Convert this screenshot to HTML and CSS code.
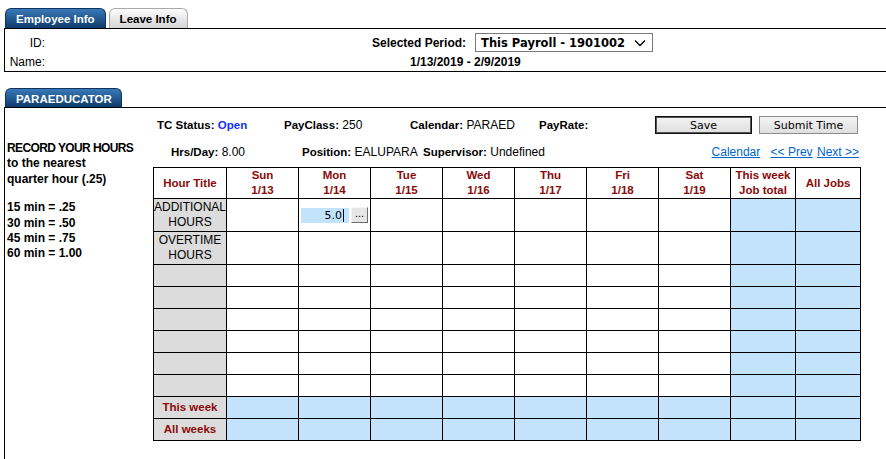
FILE: index.html
```html
<!DOCTYPE html>
<html>
<head>
  <meta charset="UTF-8">
  <title>Time Card - Employee Info</title>
  <link rel="stylesheet" href="styles.css">
</head>
<body>
  <div class="tabs">
    <div class="tab active">Employee Info</div>
    <div class="tab">Leave Info</div>
  </div>

  <div class="info-box">
    <div class="info-row">
      <span class="info-label">ID:</span>
      <span class="period-label">Selected Period:</span>
      <div class="period-select">
        <span>This Payroll - 1901002</span>
        <svg width="12" height="8" viewBox="0 0 12 8"><path d="M1 1.5 L6 6.5 L11 1.5" fill="none" stroke="#000" stroke-width="1.3"/></svg>
      </div>
    </div>
    <div class="info-row">
      <span class="info-label">Name:</span>
      <span class="period-dates">1/13/2019 - 2/9/2019</span>
    </div>
  </div>

  <div class="tabs job-tabs">
    <div class="tab active">PARAEDUCATOR</div>
  </div>

  <div class="job-box">
    <div class="instructions">
      <p><span class="caps">RECORD YOUR HOURS</span><br>to the nearest<br>quarter hour (.25)</p>
      <p>15 min = .25<br>30 min = .50<br>45 min = .75<br>60 min = 1.00</p>
    </div>

    <div class="timecard">
      <div class="status-row">
        <span class="field f-status"><b>TC Status:</b> <b class="open">Open</b></span>
        <span class="field f-payclass"><b>PayClass:</b> 250</span>
        <span class="field f-calendar"><b>Calendar:</b> PARAED</span>
        <span class="field f-payrate"><b>PayRate:</b></span>
        <button class="btn default">Save</button>
        <button class="btn">Submit Time</button>
      </div>

      <div class="detail-row">
        <span class="field f-hrs"><b>Hrs/Day:</b> 8.00</span>
        <span class="field f-position"><b>Position:</b> EALUPARA</span>
        <span class="field"><b>Supervisor:</b> Undefined</span>
        <span class="nav-links">
          <a href="#" class="cal-link">Calendar</a>
          <a href="#" class="prev-link">&lt;&lt; Prev</a>
          <a href="#">Next &gt;&gt;</a>
        </span>
      </div>

      <table class="hours">
        <colgroup>
          <col class="c-title">
          <col class="c-day"><col class="c-day"><col class="c-day"><col class="c-day">
          <col class="c-day"><col class="c-day"><col class="c-day">
          <col class="c-total"><col class="c-total">
        </colgroup>
        <thead>
          <tr class="head-row">
            <th>Hour Title</th>
            <th>Sun<br>1/13</th>
            <th>Mon<br>1/14</th>
            <th>Tue<br>1/15</th>
            <th>Wed<br>1/16</th>
            <th>Thu<br>1/17</th>
            <th>Fri<br>1/18</th>
            <th>Sat<br>1/19</th>
            <th>This week<br>Job total</th>
            <th>All Jobs</th>
          </tr>
        </thead>
        <tbody>
          <tr class="tall-row">
            <td class="title">ADDITIONAL<br>HOURS</td>
            <td></td>
            <td>
              <span class="entry">
                <span class="hours-input">5.0<span class="caret"></span></span>
                <span class="more-btn">...</span>
              </span>
            </td>
            <td></td><td></td><td></td><td></td><td></td>
            <td class="sum"></td><td class="sum"></td>
          </tr>
          <tr class="tall-row">
            <td class="title">OVERTIME<br>HOURS</td>
            <td></td><td></td><td></td><td></td><td></td><td></td><td></td>
            <td class="sum"></td><td class="sum"></td>
          </tr>
          <tr><td class="title"></td><td></td><td></td><td></td><td></td><td></td><td></td><td></td><td class="sum"></td><td class="sum"></td></tr>
          <tr><td class="title"></td><td></td><td></td><td></td><td></td><td></td><td></td><td></td><td class="sum"></td><td class="sum"></td></tr>
          <tr><td class="title"></td><td></td><td></td><td></td><td></td><td></td><td></td><td></td><td class="sum"></td><td class="sum"></td></tr>
          <tr><td class="title"></td><td></td><td></td><td></td><td></td><td></td><td></td><td></td><td class="sum"></td><td class="sum"></td></tr>
          <tr><td class="title"></td><td></td><td></td><td></td><td></td><td></td><td></td><td></td><td class="sum"></td><td class="sum"></td></tr>
          <tr><td class="title"></td><td></td><td></td><td></td><td></td><td></td><td></td><td></td><td class="sum"></td><td class="sum"></td></tr>
          <tr class="total-row">
            <td class="title">This week</td>
            <td></td><td></td><td></td><td></td><td></td><td></td><td></td><td></td><td></td>
          </tr>
          <tr class="total-row">
            <td class="title">All weeks</td>
            <td></td><td></td><td></td><td></td><td></td><td></td><td></td><td></td><td></td>
          </tr>
        </tbody>
      </table>
    </div>
  </div>
</body>
</html>
```

FILE: styles.css
```css
:root {
  --tab-blue-top: #3a79b8;
  --tab-blue-bottom: #0e3b6c;
  --header-red: #8b0a0a;
  --cell-blue: #c3e3fd;
  --cell-gray: #dcdcdc;
  --link-blue: #0066cc;
}

body {
  margin: 0;
  font-family: "Liberation Sans", Arial, sans-serif;
  font-size: 12px;
  color: #000;
  background: #fff;
}

p {
  margin: 0;
}

/* tabs */
.tabs {
  display: flex;
  gap: 3px;
  padding: 8px 0 0 5px;
  height: 20px;
}
.tab {
  height: 20px;
  line-height: 21px;
  padding: 0 10px;
  box-sizing: border-box;
  border: 1px solid #a8a8a8;
  border-bottom: none;
  border-radius: 6px 6px 0 0;
  background: linear-gradient(#fcfcfc, #d5d5d5);
  font-weight: bold;
  font-size: 11.5px;
}
.tab.active {
  border-color: #0c3461;
  background: linear-gradient(var(--tab-blue-top), var(--tab-blue-bottom));
  color: #fff;
}

/* employee info */
.info-box {
  margin-left: 4px;
  height: 38px;
  border: 1px solid #000;
  border-right: none;
  padding-top: 4px;
}
.info-row {
  display: flex;
  align-items: center;
  height: 19px;
}
.info-label {
  width: 40px;
  text-align: right;
}
.period-label {
  margin-left: 327px;
  font-weight: bold;
}
.period-select {
  display: flex;
  align-items: center;
  justify-content: space-between;
  margin-left: 9px;
  width: 178px;
  height: 19px;
  box-sizing: border-box;
  padding: 0 6px 0 5px;
  border: 1px solid #7a7a7a;
  font-family: "DejaVu Sans", Verdana, sans-serif;
  font-size: 11.5px;
  font-weight: bold;
}
.period-dates {
  margin-left: 365px;
  font-weight: bold;
}

/* job section */
.job-tabs {
  padding-top: 16px;
  height: 19px;
}
.job-tabs .tab {
  height: 19px;
  line-height: 20px;
  padding: 0 9px 0 10px;
  font-size: 11.5px;
}
.job-box {
  display: flex;
  margin-left: 4px;
  height: 360px;
  border-left: 1px solid #000;
  border-top: 1px solid #000;
}

.instructions {
  width: 146px;
  padding: 33px 0 0 2px;
  font-size: 12px;
  font-weight: bold;
  line-height: 15.4px;
}
.instructions .caps {
  letter-spacing: -0.6px;
}
.instructions p + p {
  margin-top: 13px;
}

.timecard {
  padding-top: 8px;
}

.status-row,
.detail-row {
  display: flex;
  align-items: center;
  height: 18px;
}
.status-row {
  padding-left: 4px;
}
.detail-row {
  margin-top: 9px;
  padding-left: 18px;
  padding-right: 2px;
}
.field b {
  font-size: 11.5px;
}
.open {
  color: #1030ff;
}
.f-status { width: 127px; }
.f-payclass { width: 126px; }
.f-calendar { width: 129px; }
.f-payrate { width: 116px; }
.f-hrs { width: 131px; }
.f-position { width: 121px; }

.btn {
  height: 18px;
  padding: 0;
  border: 1px solid #8c8c8c;
  background: linear-gradient(#f4f4f4, #dedede);
  font-family: "DejaVu Sans", Verdana, sans-serif;
  font-size: 11px;
  color: #000;
}
.btn.default {
  width: 97px;
  margin-right: 7px;
  border: 1px solid #111;
  box-shadow: inset 0 0 0 1px #555;
}
.btn + .btn {
  width: 99px;
}

.nav-links {
  margin-left: auto;
}
.nav-links a {
  color: var(--link-blue);
}
.cal-link {
  margin-right: 7px;
}
.prev-link {
  margin-right: 1px;
}

/* hours grid */
.hours {
  margin-top: 6px;
  border-collapse: collapse;
  table-layout: fixed;
  width: 708px;
}
.c-title { width: 73px; }
.c-day { width: 72px; }
.c-total { width: 65px; }

.hours th,
.hours td {
  border: 1px solid #000;
  padding: 0;
  text-align: center;
  vertical-align: middle;
}
.hours th {
  color: var(--header-red);
  font-size: 11.5px;
  line-height: 15px;
}
.head-row { height: 31px; }
.hours tr { height: 22px; }
.hours tr.tall-row { height: 33px; }

.hours td.title {
  background: var(--cell-gray);
  line-height: 15px;
}
.hours td.sum,
.total-row td {
  background: var(--cell-blue);
}
.total-row td.title {
  background: var(--cell-gray);
  color: var(--header-red);
  font-weight: bold;
  font-size: 11.5px;
}

.entry {
  display: inline-flex;
  align-items: center;
  gap: 2px;
  vertical-align: middle;
}
.hours-input {
  display: inline-flex;
  align-items: center;
  justify-content: flex-end;
  width: 48px;
  height: 15px;
  box-sizing: border-box;
  padding-right: 5px;
  background: var(--cell-blue);
  font-family: "DejaVu Sans", Verdana, sans-serif;
  font-size: 11px;
}
.caret {
  display: inline-block;
  width: 1px;
  height: 13px;
  margin-left: 1px;
  background: #000;
}
.more-btn {
  display: inline-block;
  width: 17px;
  height: 16px;
  box-sizing: border-box;
  border: 1px solid;
  border-color: #f4f4f4 #6d6d6d #6d6d6d #f4f4f4;
  background: #e6e6e6;
  font-size: 11px;
  line-height: 11px;
  text-align: center;
}
```
